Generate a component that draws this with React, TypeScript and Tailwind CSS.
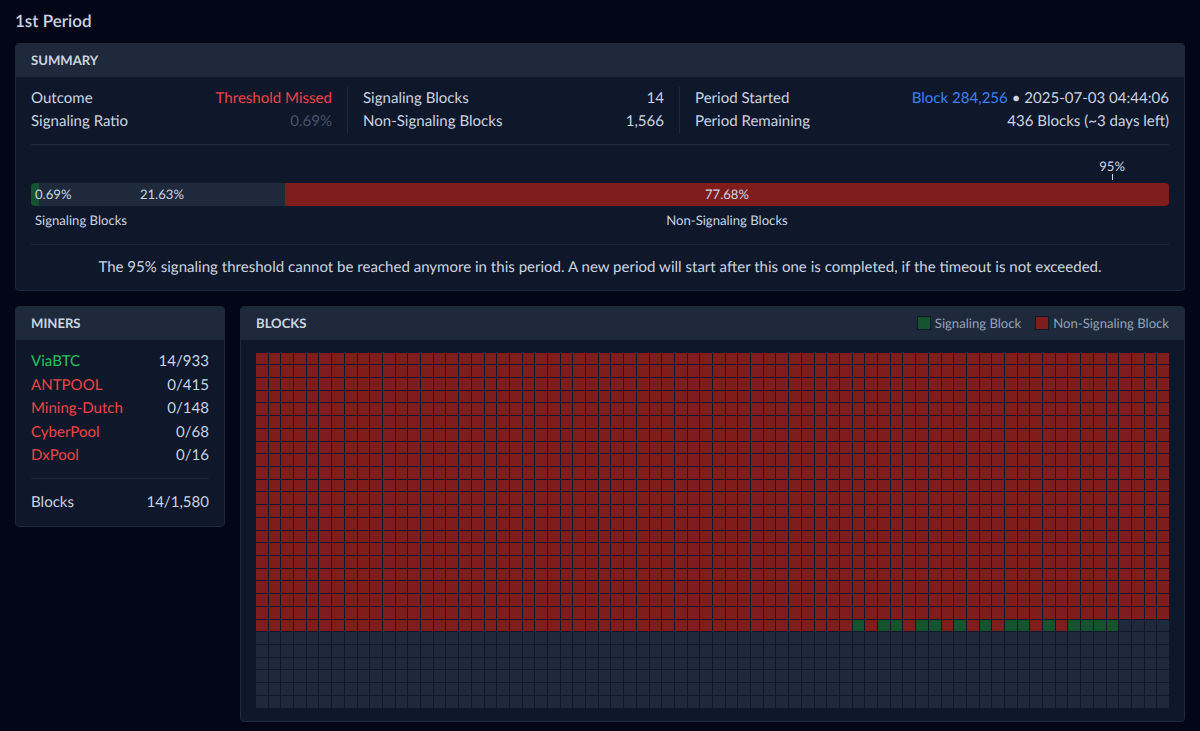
const signaled = new Set([47, 49, 50, 52, 53, 55, 57, 59, 60, 62, 64, 65, 66, 67]);
const total = 2016;
const mined = 1580;
const lastRowStart = 1512;

const miners = [
  { name: "ViaBTC", value: "14/933", color: "text-[#22c55e]" },
  { name: "ANTPOOL", value: "0/415", color: "text-[#ef4444]" },
  { name: "Mining-Dutch", value: "0/148", color: "text-[#ef4444]" },
  { name: "CyberPool", value: "0/68", color: "text-[#ef4444]" },
  { name: "DxPool", value: "0/16", color: "text-[#ef4444]" },
];

function CardHeader({ title, children }: { title: string; children?: React.ReactNode }) {
  return (
    <div className="flex h-[33px] items-center justify-between rounded-t bg-[#1e293b] px-[15px]">
      <h2 className="text-[13.125px] font-bold text-[#cbd5e1]">{title}</h2>
      {children}
    </div>
  );
}

function Row({ label, children, className }: { label: string; children: React.ReactNode; className?: string }) {
  return (
    <div className="flex h-[23px] items-center justify-between">
      <span>{label}</span>
      <span className={className}>{children}</span>
    </div>
  );
}

function Block({ index }: { index: number }) {
  let color = "bg-[#1e293b]";
  if (index < mined) {
    color = index >= lastRowStart && signaled.has(index - lastRowStart) ? "bg-[#14532d]" : "bg-[#7f1d1d]";
  }
  return <div className={color} />;
}

export default function App() {
  return (
    <div className="min-h-screen bg-[#020617] px-[15px] pt-[10px] pb-[10px] font-['Lato',sans-serif] text-[15.05px] leading-[22.5px] text-[#cbd5e1] antialiased [text-rendering:geometricPrecision]">
      <h1 className="mb-[10px] h-[23px] text-[17px] font-semibold">1st Period</h1>

      <section className="rounded border border-[#1e293b] bg-[#0f172a]">
        <CardHeader title="SUMMARY" />
        <div className="px-[15px]">
          <div className="flex border-b border-[#1e293b] pt-[10px] pb-[11px]">
            <div className="w-[317px] border-r border-[#1e293b] pr-[15px]">
              <Row label="Outcome" className="text-[#ef4444]">Threshold Missed</Row>
              <Row label="Signaling Ratio" className="text-[#475569]">0.69%</Row>
            </div>
            <div className="ml-[15px] w-[317px] border-r border-[#1e293b] pr-[15px]">
              <Row label="Signaling Blocks">14</Row>
              <Row label="Non-Signaling Blocks">1,566</Row>
            </div>
            <div className="ml-[15px] flex-1">
              <Row label="Period Started">
                <span className="text-[#3b82f6]">Block 284,256</span> • 2025-07-03 04:44:06
              </Row>
              <Row label="Period Remaining">436 Blocks (~3 days left)</Row>
            </div>
          </div>

          <div className="relative pt-[38px] text-[13.125px]">
            <div className="absolute top-[11px] left-[95%] -translate-x-1/2 leading-[20px]">95%</div>
            <div className="absolute top-[29px] left-[95%] h-[6px] w-px bg-[#cbd5e1]" />
            <div className="flex h-[23px] items-center overflow-hidden rounded bg-[#1e293b]">
              <div className="flex h-full w-[0.69%] items-center whitespace-nowrap bg-[#14532d] pl-1">0.69%</div>
              <div className="w-[21.63%] text-center">21.63%</div>
              <div className="flex h-full w-[77.68%] items-center justify-center bg-[#7f1d1d]">77.68%</div>
            </div>
            <div className="flex h-[28px] items-center">
              <div className="w-[22.32%] pl-1">Signaling Blocks</div>
              <div className="w-[77.68%] text-center">Non-Signaling Blocks</div>
            </div>
          </div>

          <p className="mt-[10px] border-t border-[#1e293b] pt-[11px] pb-[11px] text-center">
            The 95% signaling threshold cannot be reached anymore in this period. A new period will start after this one is completed, if the timeout is not exceeded.
          </p>
        </div>
      </section>

      <div className="mt-[15px] flex items-start gap-[15px]">
        <section className="w-[210px] shrink-0 rounded border border-[#1e293b] bg-[#0f172a]">
          <CardHeader title="MINERS" />
          <div className="px-[15px] pt-[10px] pb-[12px]">
            {miners.map((m) => (
              <div key={m.name} className="flex h-[23.5px] items-center justify-between">
                <span className={m.color}>{m.name}</span>
                <span>{m.value}</span>
              </div>
            ))}
            <div className="mt-[11px] flex h-[36px] items-end justify-between border-t border-[#1e293b] pb-[1px]">
              <span>Blocks</span>
              <span>14/1,580</span>
            </div>
          </div>
        </section>

        <section className="min-w-0 flex-1 rounded border border-[#1e293b] bg-[#0f172a]">
          <CardHeader title="BLOCKS">
            <div className="flex items-center gap-[14px] text-[13.125px] text-[#94a3b8]">
              <div className="flex items-center gap-1">
                <span className="h-[14px] w-[14px] border border-[#0f172a] bg-[#14532d]" />
                Signaling Block
              </div>
              <div className="flex items-center gap-1">
                <span className="h-[14px] w-[14px] border border-[#0f172a] bg-[#7f1d1d]" />
                Non-Signaling Block
              </div>
            </div>
          </CardHeader>
          <div className="grid auto-rows-[11.72px] grid-cols-[repeat(72,minmax(0,1fr))] gap-px px-[15px] pt-[13px] pb-[13px]">
            {Array.from({ length: total }, (_, i) => (
              <Block key={i} index={i} />
            ))}
          </div>
        </section>
      </div>
    </div>
  );
}
